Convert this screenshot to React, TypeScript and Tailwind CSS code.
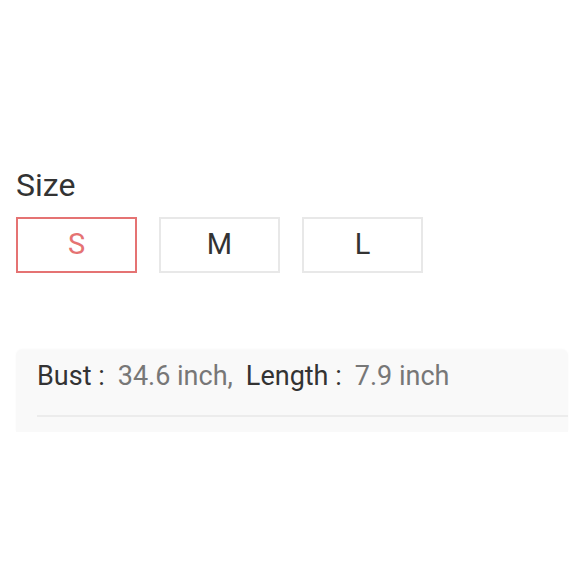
export default function App() {
  const sizes = ["S", "M", "L"];
  const selected = "S";
  return (
    <div className="min-h-[579px] w-[580px] bg-white font-['Roboto',sans-serif]">
      <div className="px-4 pt-[165px]">
        <h2 className="text-[32px] leading-[40px] text-[#333]">Size</h2>
        <div className="mt-[12px] flex gap-[22px]">
          {sizes.map((s) => (
            <button
              key={s}
              className={
                s === selected
                  ? "flex h-[56px] w-[121px] items-center justify-center border-2 border-[#e57373] text-[29px] text-[#e57373]"
                  : "flex h-[56px] w-[121px] items-center justify-center border-2 border-[#e8e8e8] text-[29px] text-[#333]"
              }
            >
              {s}
            </button>
          ))}
        </div>
      </div>
      <div className="ml-4 mr-3 mt-[77px] rounded-t-[6px] bg-[#f9f9f9] pl-[21px] shadow-[0_-1px_2px_rgba(0,0,0,0.03)]">
        <div className="flex h-[67px] items-center border-b-2 border-[#ececec] pb-[12px] text-[27px]">
          <span className="text-[#333]">Bust :</span>
          <span className="ml-[13px] text-[#777]">34.6 inch,</span>
          <span className="ml-[13px] text-[#333]">Length :</span>
          <span className="ml-[13px] text-[#777]">7.9 inch</span>
        </div>
        <div className="h-[15px]" />
      </div>
    </div>
  );
}
